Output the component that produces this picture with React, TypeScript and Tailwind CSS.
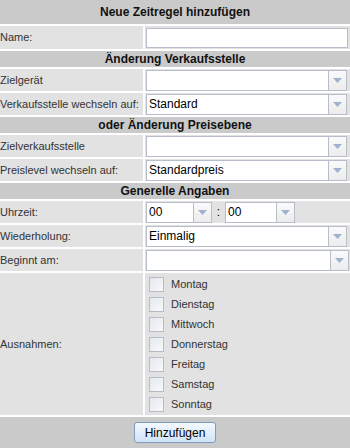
import React from 'react';

const font = { fontFamily: '"Liberation Sans", Arial, sans-serif' };

const Arrow: React.FC = () => (
  <div className="w-[18px] h-full flex items-center justify-center border-l border-[#b7bec9] bg-gradient-to-b from-[#fafafa] to-[#ececec]">
    <svg width="9" height="5" viewBox="0 0 9 5">
      <path d="M0 0H9L4.5 5Z" fill="#9fb2cf" />
    </svg>
  </div>
);

const Select: React.FC<{ value?: string; className?: string }> = ({ value = '', className = 'w-[201px]' }) => (
  <div className={`${className} h-[21px] flex bg-white border border-[#b7bec9]`}>
    <div className="flex-1 flex items-center pl-[2px] text-[12px] text-black">{value}</div>
    <Arrow />
  </div>
);

const Header: React.FC<{ title: string; tall?: boolean }> = ({ title, tall }) => (
  <div
    className={`${tall ? 'h-[24px]' : 'h-[16px]'} bg-[#cacaca] flex items-center justify-center text-[12px] font-bold text-[#111]`}
  >
    {title}
  </div>
);

const Row: React.FC<{ label: string; h?: string; children: React.ReactNode }> = ({ label, h = 'h-[22px]', children }) => (
  <div className={`flex gap-[2px] ${h}`}>
    <div className="w-[143px] bg-[#e2e2e2] flex items-center text-[11px] text-[#333]">{label}</div>
    <div className="flex-1 bg-[#e2e2e2] flex items-center pl-[1px]">{children}</div>
  </div>
);

const days = ['Montag', 'Dienstag', 'Mittwoch', 'Donnerstag', 'Freitag', 'Samstag', 'Sonntag'];

export default function App() {
  return (
    <div className="w-[350px] h-[448px] bg-white flex flex-col gap-[2px] overflow-hidden" style={font}>
      <Header title="Neue Zeitregel hinzufügen" tall />
      <Row label="Name:" h="h-[23px]">
        <div className="w-[202px] h-[20px] bg-white border border-[#b7bec9]" />
      </Row>
      <Header title="Änderung Verkaufsstelle" />
      <Row label="Zielgerät">
        <Select />
      </Row>
      <Row label="Verkaufsstelle wechseln auf:">
        <Select value="Standard" />
      </Row>
      <Header title="oder Änderung Preisebene" />
      <Row label="Zielverkaufsstelle">
        <Select />
      </Row>
      <Row label="Preislevel wechseln auf:">
        <Select value="Standardpreis" />
      </Row>
      <Header title="Generelle Angaben" />
      <Row label="Uhrzeit:">
        <div className="flex items-center">
          <Select value="00" className="w-[66px]" />
          <span className="w-[13px] text-center text-[12px] text-black">:</span>
          <Select value="00" className="w-[70px]" />
        </div>
      </Row>
      <Row label="Wiederholung:">
        <Select value="Einmalig" />
      </Row>
      <Row label="Beginnt am:">
        <Select className="w-[203px]" />
      </Row>
      <Row label="Ausnahmen:" h="h-[142px]">
        <div className="flex flex-col gap-[5px] pl-[3px]">
          {days.map(d => (
            <div key={d} className="flex items-center gap-[7px] h-[15px]">
              <div className="w-[15px] h-[15px] border border-[#b5bcc7] bg-gradient-to-br from-[#e4e8ee] to-[#f8f9fb]" />
              <span className="text-[11px] text-[#333]">{d}</span>
            </div>
          ))}
        </div>
      </Row>
      <div className="flex-1 bg-[#cacaca] flex items-center justify-center">
        <button className="w-[82px] h-[21px] rounded-[3px] border border-[#7f9bbd] bg-gradient-to-b from-[#f5f9fe] to-[#cfe3f7] text-[12px] text-black">
          Hinzufügen
        </button>
      </div>
    </div>
  );
}
